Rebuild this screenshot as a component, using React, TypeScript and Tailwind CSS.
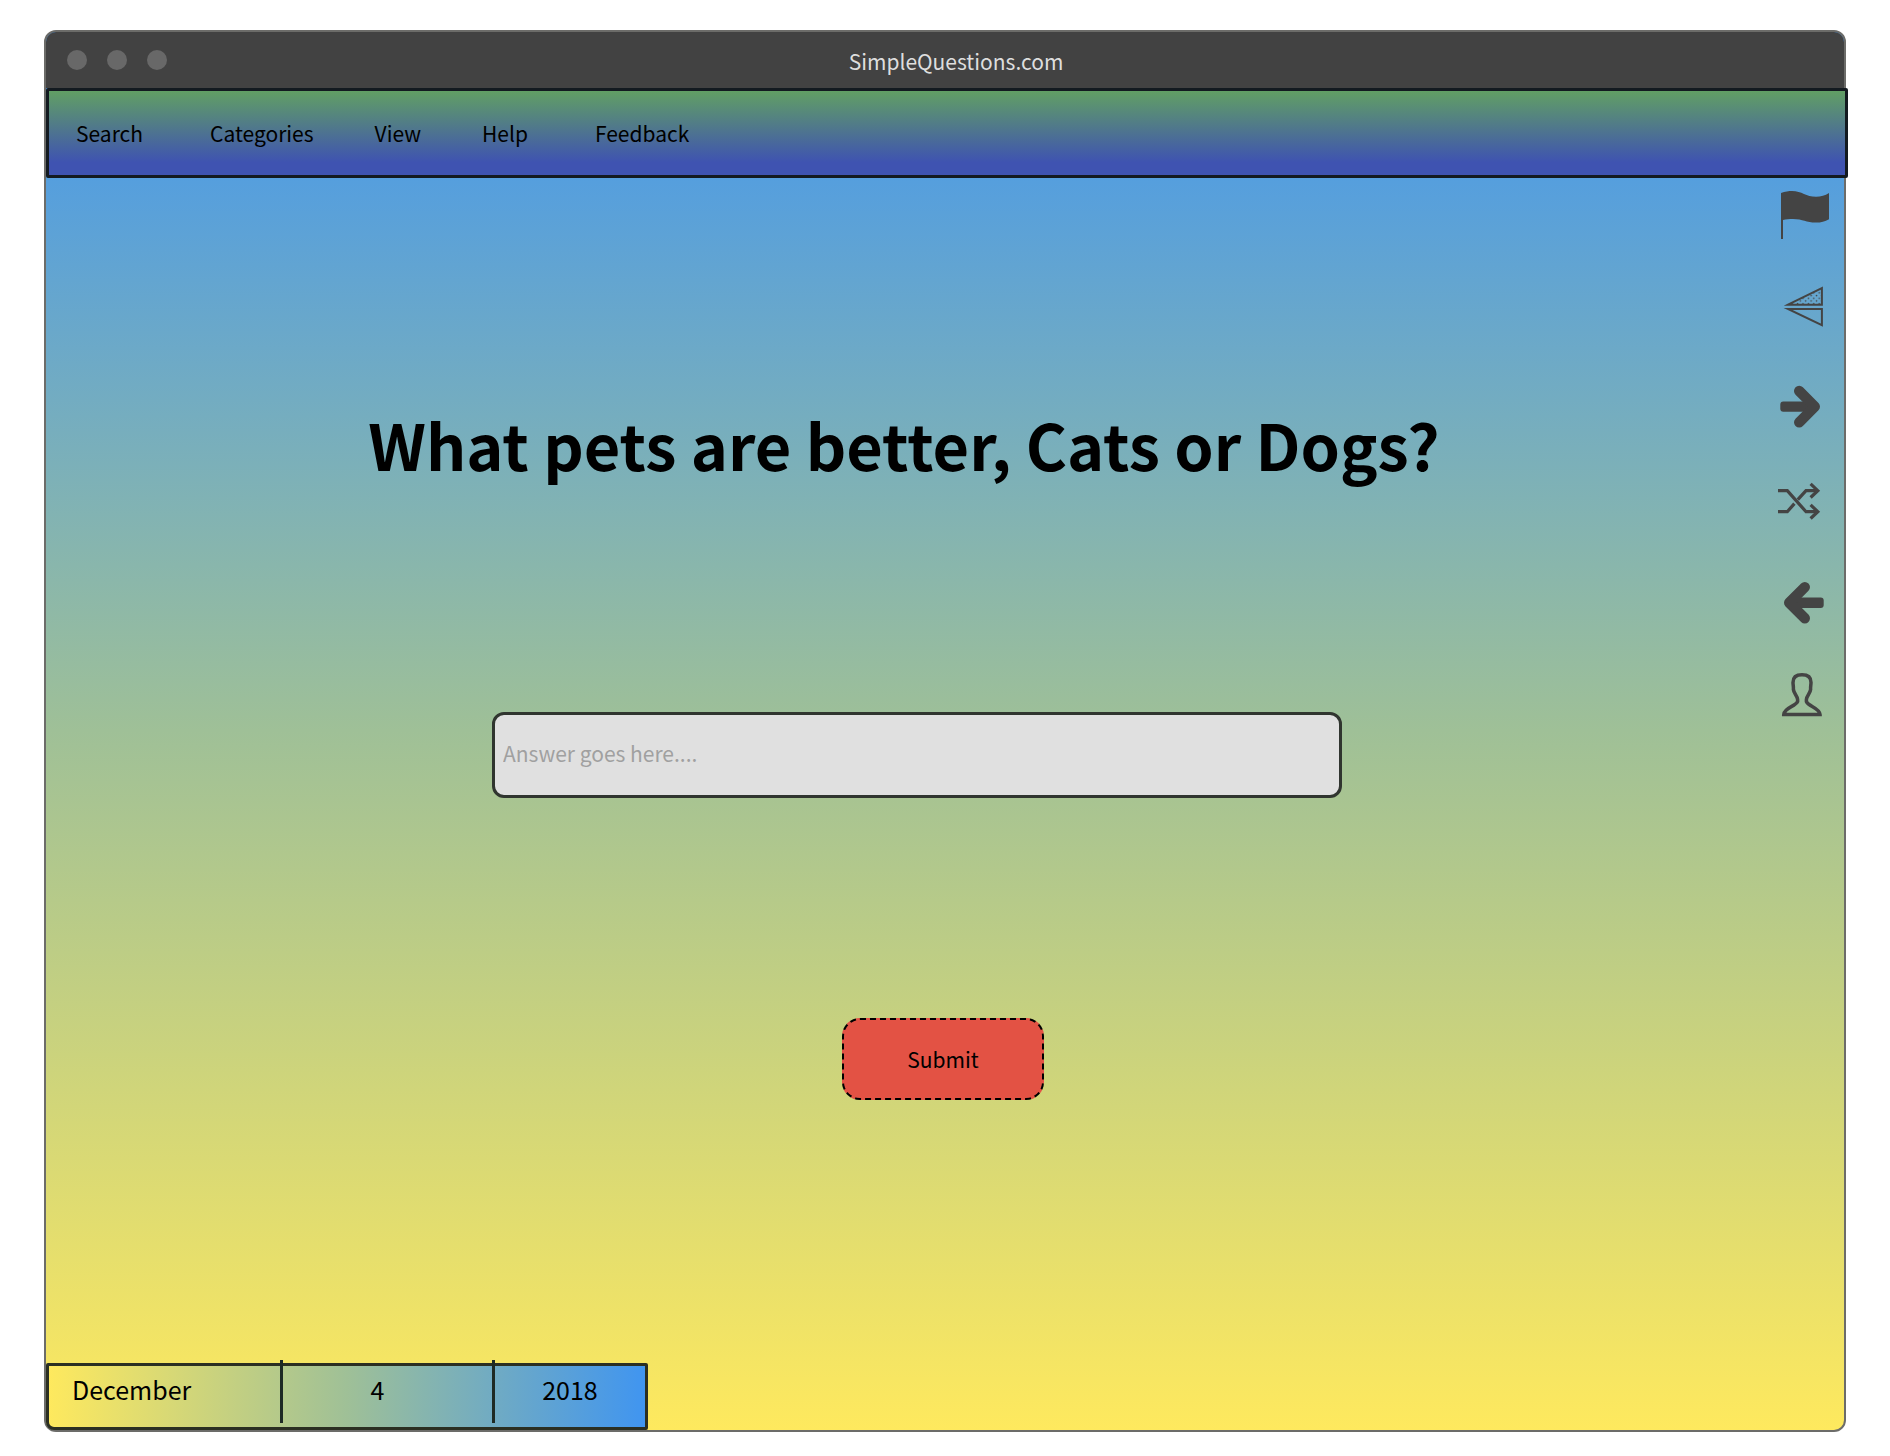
import React from "react";

const menuItems = [
  { label: "Search", gap: "mr-[67px]" },
  { label: "Categories", gap: "mr-[61px]" },
  { label: "View", gap: "mr-[61px]" },
  { label: "Help", gap: "mr-[67px]" },
  { label: "Feedback", gap: "" },
];

function Icon({ children }: { children: React.ReactNode }) {
  return (
    <svg viewBox="0 0 52 52" className="block h-[52px] w-[52px]" fill="none" aria-hidden="true">
      {children}
    </svg>
  );
}

const ink = "#444444";

function FlagIcon() {
  return (
    <Icon>
      <path
        fill={ink}
        d="M3 5C7 3.4 11 3 14 3C24 3 28 8.8 38 8.8C43 8.8 47 7.6 51 5V31.3C47 33.8 43 34.6 38 34.6C28 34.6 25 31 15 31C11 31 8 31.3 5 32V51H3Z"
      />
    </Icon>
  );
}

function FlipIcon() {
  return (
    <Icon>
      <defs>
        <pattern id="flip-dots" x="2" y="2" width="5.4" height="5.4" patternUnits="userSpaceOnUse">
          <circle cx="1.4" cy="1.4" r="0.8" fill={ink} />
          <circle cx="4.1" cy="4.1" r="0.8" fill={ink} />
        </pattern>
      </defs>
      <path
        d="M10 20.7L43.9 4.2V20.7Z"
        fill="url(#flip-dots)"
        stroke={ink}
        strokeWidth="2"
        strokeMiterlimit="10"
      />
      <path d="M10 24.9H43.9V41.2Z" stroke={ink} strokeWidth="2" strokeMiterlimit="10" />
    </Icon>
  );
}

function NextIcon() {
  return (
    <Icon>
      <rect x="2.3" y="21.4" width="32" height="10.4" rx="3" fill={ink} />
      <path
        d="M21.2 11L36.8 26.6L21.2 42.3"
        stroke={ink}
        strokeWidth="10.4"
        strokeLinecap="round"
        strokeLinejoin="round"
      />
    </Icon>
  );
}

function ShuffleIcon() {
  return (
    <Icon>
      <g stroke={ink} strokeWidth="3.2">
        <path d="M0 14.7H9.3L28 35.7H40" />
        <path d="M0 35.7H9.3L16.4 27.6" />
        <path d="M19.8 23.6L28 14.7H40" />
        <path d="M32.6 7.9L39.8 14.7L32.6 21.5" />
        <path d="M32.6 28.9L39.8 35.7L32.6 42.5" />
      </g>
    </Icon>
  );
}

function PreviousIcon() {
  return (
    <Icon>
      <rect x="13.7" y="25.5" width="32" height="10.4" rx="3" fill={ink} />
      <path
        d="M26.8 15.1L11.2 30.7L26.8 46.3"
        stroke={ink}
        strokeWidth="10.4"
        strokeLinecap="round"
        strokeLinejoin="round"
      />
    </Icon>
  );
}

function UserIcon() {
  return (
    <Icon>
      <path
        d="M24 6.8C17.8 6.8 15 9.8 15 14.5C15 17 15.6 18.5 15.4 21.5C15.8 25.5 19.2 27.5 19.6 31.5V33.5C17.3 38.6 6.4 39.6 5.8 46.4H42C41.4 39.6 30.5 38.6 28.4 33.5V31.5C28.8 27.5 32.2 25.5 32.6 21.5C32.4 18.5 33 17 33 14.5C33 9.8 30.2 6.8 24 6.8Z"
        stroke={ink}
        strokeWidth="3.5"
      />
    </Icon>
  );
}

const tools = [
  { label: "Flag question", icon: <FlagIcon /> },
  { label: "Flip", icon: <FlipIcon /> },
  { label: "Next question", icon: <NextIcon /> },
  { label: "Shuffle", icon: <ShuffleIcon /> },
  { label: "Previous question", icon: <PreviousIcon /> },
  { label: "Profile", icon: <UserIcon /> },
];

export default function App() {
  return (
    <div className="flex min-h-screen flex-col bg-white pt-[30px] pr-11 pb-6 pl-11 font-['Noto_Sans_CJK_SC','Noto_Sans',sans-serif] text-[21px] leading-8 text-black">
      <div className="flex flex-1 flex-col rounded-xl border-2 border-[#6c6c69] bg-linear-to-b/srgb from-[#4296f0] via-[#9fc097] to-[#fee95e]">
        <header className="flex h-14 items-center rounded-t-[10px] bg-[#424242] px-[21px]">
          <div className="flex w-[102px] gap-5">
            <span className="size-5 rounded-full bg-[#686868]" />
            <span className="size-5 rounded-full bg-[#686868]" />
            <span className="size-5 rounded-full bg-[#686868]" />
          </div>
          <div className="flex-1 pt-0.5 pr-20 text-center text-[#dedede]">SimpleQuestions.com</div>
        </header>

        <nav className="-mr-1 flex h-[90px] items-center rounded-xs border-[3px] border-[#131a20] bg-linear-to-b/srgb from-[#619f64] via-[#3f53b1] via-85% to-[#3f53b1] pl-[27px]">
          {menuItems.map((item) => (
            <a key={item.label} href="#" className={item.gap}>
              {item.label}
            </a>
          ))}
        </nav>

        <main className="flex flex-1">
          <form className="flex flex-1 flex-col items-center" onSubmit={(e) => e.preventDefault()}>
            <h1 className="pt-[234px] pr-4 text-[63px] leading-16 font-bold">
              <label htmlFor="answer">What pets are better, Cats or Dogs?</label>
            </h1>
            <div className="pt-[236px] pl-[10px]">
              <input
                id="answer"
                type="text"
                placeholder="Answer goes here...."
                className="block h-[86px] w-[850px] max-w-full rounded-xl border-[3px] border-[#30352f] bg-[#e0e0e0] px-2 pb-1 placeholder:text-[#a0a0a0]"
              />
            </div>
            <div className="pt-[220px] pl-[62px]">
              <button
                type="submit"
                className="block h-[82px] w-[202px] rounded-[18px] border-2 border-dashed border-black bg-[#e35244]"
              >
                Submit
              </button>
            </div>
          </form>
          <aside className="flex flex-col gap-11 pt-[10px] pr-[14px]">
            {tools.map((tool) => (
              <button key={tool.label} type="button" aria-label={tool.label}>
                {tool.icon}
              </button>
            ))}
          </aside>
        </main>

        <footer className="flex h-[67px] w-[602px] max-w-full rounded-xs rounded-bl-lg border-[3px] border-[#2b2f22] bg-linear-to-r/srgb from-[#fee95e] via-[#9fc097] to-[#4095f0] text-[25px] leading-[46px]">
          <div className="w-[231px] pl-[23px]">December</div>
          <div className="-mt-1.5 h-[63px] w-[3px] bg-[#1e2a24]" />
          <div className="w-[209px] pr-5 text-center">4</div>
          <div className="-mt-1.5 h-[63px] w-[3px] bg-[#1e2a24]" />
          <div className="flex-1 text-center">2018</div>
        </footer>
      </div>
    </div>
  );
}
